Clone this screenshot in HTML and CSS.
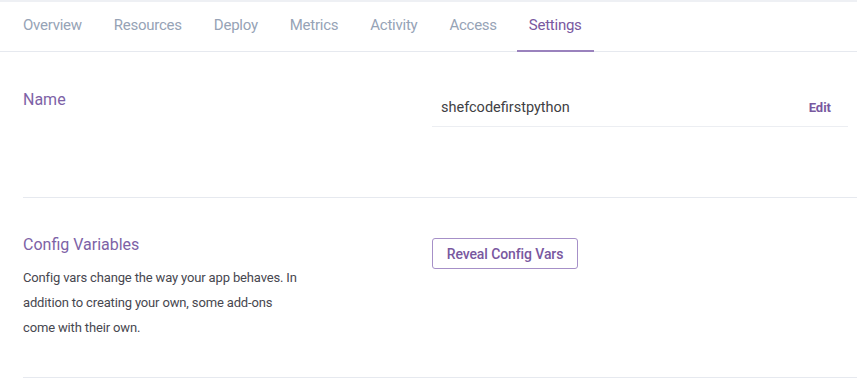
FILE: index.html
```html
<!DOCTYPE html>
<html lang="en">
<head>
<meta charset="utf-8">
<title>Settings</title>
<link rel="stylesheet" href="styles.css">
</head>
<body>
<nav class="tabs">
  <a class="tab">Overview</a>
  <a class="tab">Resources</a>
  <a class="tab">Deploy</a>
  <a class="tab">Metrics</a>
  <a class="tab">Activity</a>
  <a class="tab">Access</a>
  <a class="tab active">Settings</a>
</nav>
<main class="content">
  <section class="section section-name">
    <div class="label-col">
      <h2 class="section-title">Name</h2>
    </div>
    <div class="value-col">
      <div class="value-row">
        <span class="value-text">shefcodefirstpython</span>
        <a class="edit-link">Edit</a>
      </div>
    </div>
  </section>
  <section class="section section-config">
    <div class="label-col">
      <h2 class="section-title">Config Variables</h2>
      <p class="section-desc">Config vars change the way your app behaves. In addition to creating your own, some add-ons come with their own.</p>
    </div>
    <div class="value-col">
      <button class="btn-outline">Reveal Config Vars</button>
    </div>
  </section>
</main>
</body>
</html>
```
FILE: styles.css
```css
* { box-sizing: border-box; }
html, body {
  margin: 0;
  padding: 0;
  background: #fff;
  font-family: Roboto, "Liberation Sans", sans-serif;
}
.tabs {
  display: flex;
  gap: 8px;
  padding-left: 11px;
  border-top: 2px solid #eef0f4;
  border-bottom: 1px solid #e6e9ef;
  height: 52px;
}
.tab {
  display: block;
  height: 50px;
  margin-bottom: -1px;
  padding: 0 12px 3px;
  line-height: 47px;
  font-size: 15px;
  letter-spacing: -0.25px;
  color: #96a3b6;
  text-decoration: none;
}
.tab.active {
  color: #79589f;
  box-shadow: inset 0 -2px 0 #9a82bd;
}
.content {
  padding-left: 23px;
}
.section {
  display: grid;
  grid-template-columns: 409px 1fr;
  padding: 36px 9px 0 0;
  border-bottom: 1px solid #e6e9ef;
}
.section-name { padding-bottom: 70px; }
.section-config { padding-top: 35px; padding-bottom: 37px; }
.section-title {
  margin: 0;
  font-size: 16px;
  line-height: 24px;
  font-weight: 400;
  color: #7d62a6;
}
.section-desc {
  margin: 8px 0 0;
  width: 283px;
  font-size: 13px;
  line-height: 25px;
  letter-spacing: -0.15px;
  color: #47474f;
}
.value-row {
  display: flex;
  justify-content: space-between;
  align-items: baseline;
  padding: 10px 17px 8px 9px;
  border-bottom: 1px solid #eceef2;
  line-height: 20px;
}
.value-text {
  font-size: 14.5px;
  color: #3f3f44;
}
.edit-link {
  font-size: 13px;
  font-weight: 700;
  color: #79589f;
}
.btn-outline {
  margin-top: 5px;
  height: 31px;
  width: 146px;
  padding: 0;
  border: 1px solid #a690c8;
  border-radius: 3px;
  background: #fff;
  font-family: Roboto, "Liberation Sans", sans-serif;
  font-size: 14px;
  font-weight: 500;
  letter-spacing: -0.1px;
  color: #79589f;
}
```
